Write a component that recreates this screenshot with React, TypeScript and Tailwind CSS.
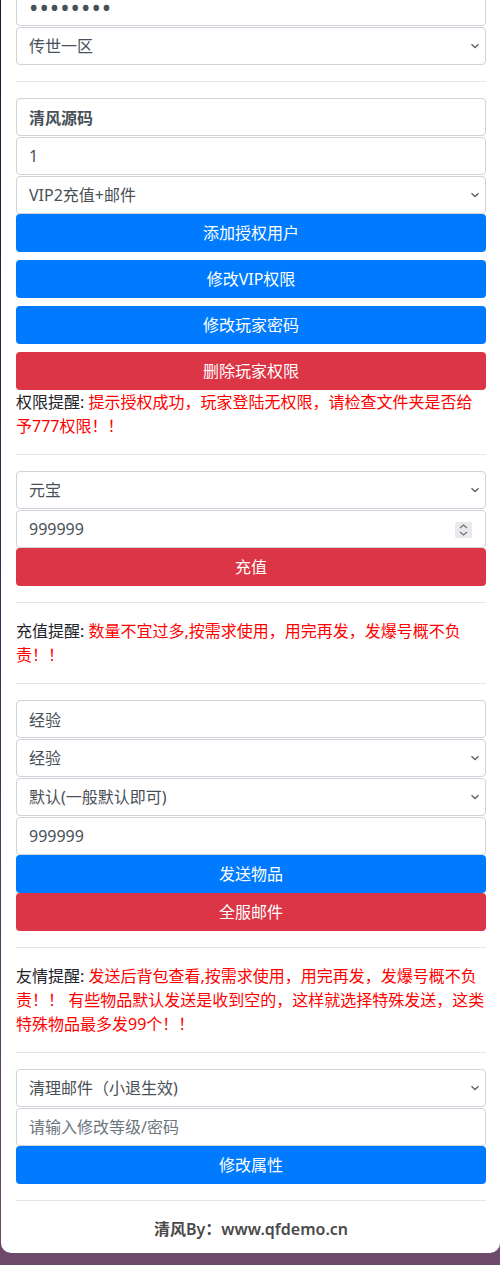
import React from 'react';

const font = { fontFamily: '"Noto Sans", "Noto Sans CJK SC", sans-serif' };

const fieldCls =
  'block w-full h-[38px] mb-px rounded-[4px] border border-[#ced4da] bg-white px-3 text-base text-[#495057] outline-none placeholder:text-[#6c757d]';

const Chevron = () => (
  <svg
    className="pointer-events-none absolute right-[6px] top-1/2 -translate-y-1/2"
    width="10"
    height="6"
    viewBox="0 0 10 6"
    fill="none"
  >
    <path d="M1.5 1.2 5 4.6 8.5 1.2" stroke="#5f6368" strokeWidth="1.4" />
  </svg>
);

const Select = ({ value }: { value: string }) => (
  <div className="relative mb-px">
    <select
      defaultValue={value}
      className="block w-full h-[38px] appearance-none rounded-[4px] border border-[#ced4da] bg-white pl-3 pr-8 text-base text-[#495057] outline-none"
    >
      <option>{value}</option>
    </select>
    <Chevron />
  </div>
);

const Btn = ({ color, children, className = '' }: { color: 'blue' | 'red'; children: React.ReactNode; className?: string }) => (
  <button
    className={`block w-full h-[38px] rounded-[4px] text-base text-white ${
      color === 'blue' ? 'bg-[#007bff]' : 'bg-[#dc3545]'
    } ${className}`}
  >
    {children}
  </button>
);

const Hr = () => <div className="my-4 h-px bg-[#e5e5e5]" />;

const Notice = ({ label, children }: { label: string; children: React.ReactNode }) => (
  <p className="text-base leading-6 text-[#212529]">
    {label}: <span className="text-[#ff0000]">{children}</span>
  </p>
);

export default function App() {
  return (
    <div
      className="relative h-[1265px] overflow-hidden bg-gradient-to-b from-[#161a33] via-[#3b2e52] to-[#6e4a6c]"
      style={font}
    >
      <div className="ml-px -mt-3 w-[499px] rounded-b-[10px] bg-white pl-[15px] pr-[14px] pb-[12px]">
        {/* Login */}
        <input
          type="password"
          defaultValue="12345678"
          className={`${fieldCls} text-[25px] tracking-[1px] text-[#3f4850]`}
        />
        <Select value="传世一区" />

        <Hr />

        {/* Auth */}
        <input defaultValue="清风源码" className={`${fieldCls} font-semibold`} />
        <input defaultValue="1" className={fieldCls} />
        <Select value="VIP2充值+邮件" />
        <div className="-mt-px flex flex-col gap-2">
          <Btn color="blue">添加授权用户</Btn>
          <Btn color="blue">修改VIP权限</Btn>
          <Btn color="blue">修改玩家密码</Btn>
          <Btn color="red">删除玩家权限</Btn>
        </div>
        <Notice label="权限提醒">提示授权成功，玩家登陆无权限，请检查文件夹是否给予777权限！！</Notice>

        <Hr />

        {/* Recharge */}
        <Select value="元宝" />
        <div className="relative">
          <input defaultValue="999999" className={fieldCls} />
          <div className="pointer-events-none absolute right-[14px] top-[12px] flex h-[16px] w-[17px] flex-col items-center justify-center gap-[2px] rounded-[2px] bg-[#e9e9ed]">
            <svg width="9" height="5" viewBox="0 0 9 5" fill="none">
              <path d="M1 4 4.5 1 8 4" stroke="#6d6d6d" strokeWidth="1.1" />
            </svg>
            <svg width="9" height="5" viewBox="0 0 9 5" fill="none">
              <path d="M1 1 4.5 4 8 1" stroke="#6d6d6d" strokeWidth="1.1" />
            </svg>
          </div>
        </div>
        <Btn color="red" className="-mt-px">充值</Btn>

        <Hr />

        <Notice label="充值提醒">数量不宜过多,按需求使用，用完再发，发爆号概不负责！！</Notice>

        <Hr />

        {/* Items */}
        <input defaultValue="经验" className={fieldCls} />
        <Select value="经验" />
        <Select value="默认(一般默认即可)" />
        <input defaultValue="999999" className={fieldCls} />
        <Btn color="blue" className="-mt-px">发送物品</Btn>
        <Btn color="red">全服邮件</Btn>

        <Hr />

        <Notice label="友情提醒">
          发送后背包查看,按需求使用，用完再发，发爆号概不负责！！ 有些物品默认发送是收到空的，这样就选择特殊发送，这类特殊物品最多发99个！！
        </Notice>

        <Hr />

        {/* Attributes */}
        <Select value="清理邮件（小退生效)" />
        <input placeholder="请输入修改等级/密码" className={fieldCls} />
        <Btn color="blue" className="-mt-px">修改属性</Btn>

        <Hr />

        <p className="text-center text-base font-semibold leading-6 text-[#4a4a4a]">清风By：www.qfdemo.cn</p>
      </div>
    </div>
  );
}
